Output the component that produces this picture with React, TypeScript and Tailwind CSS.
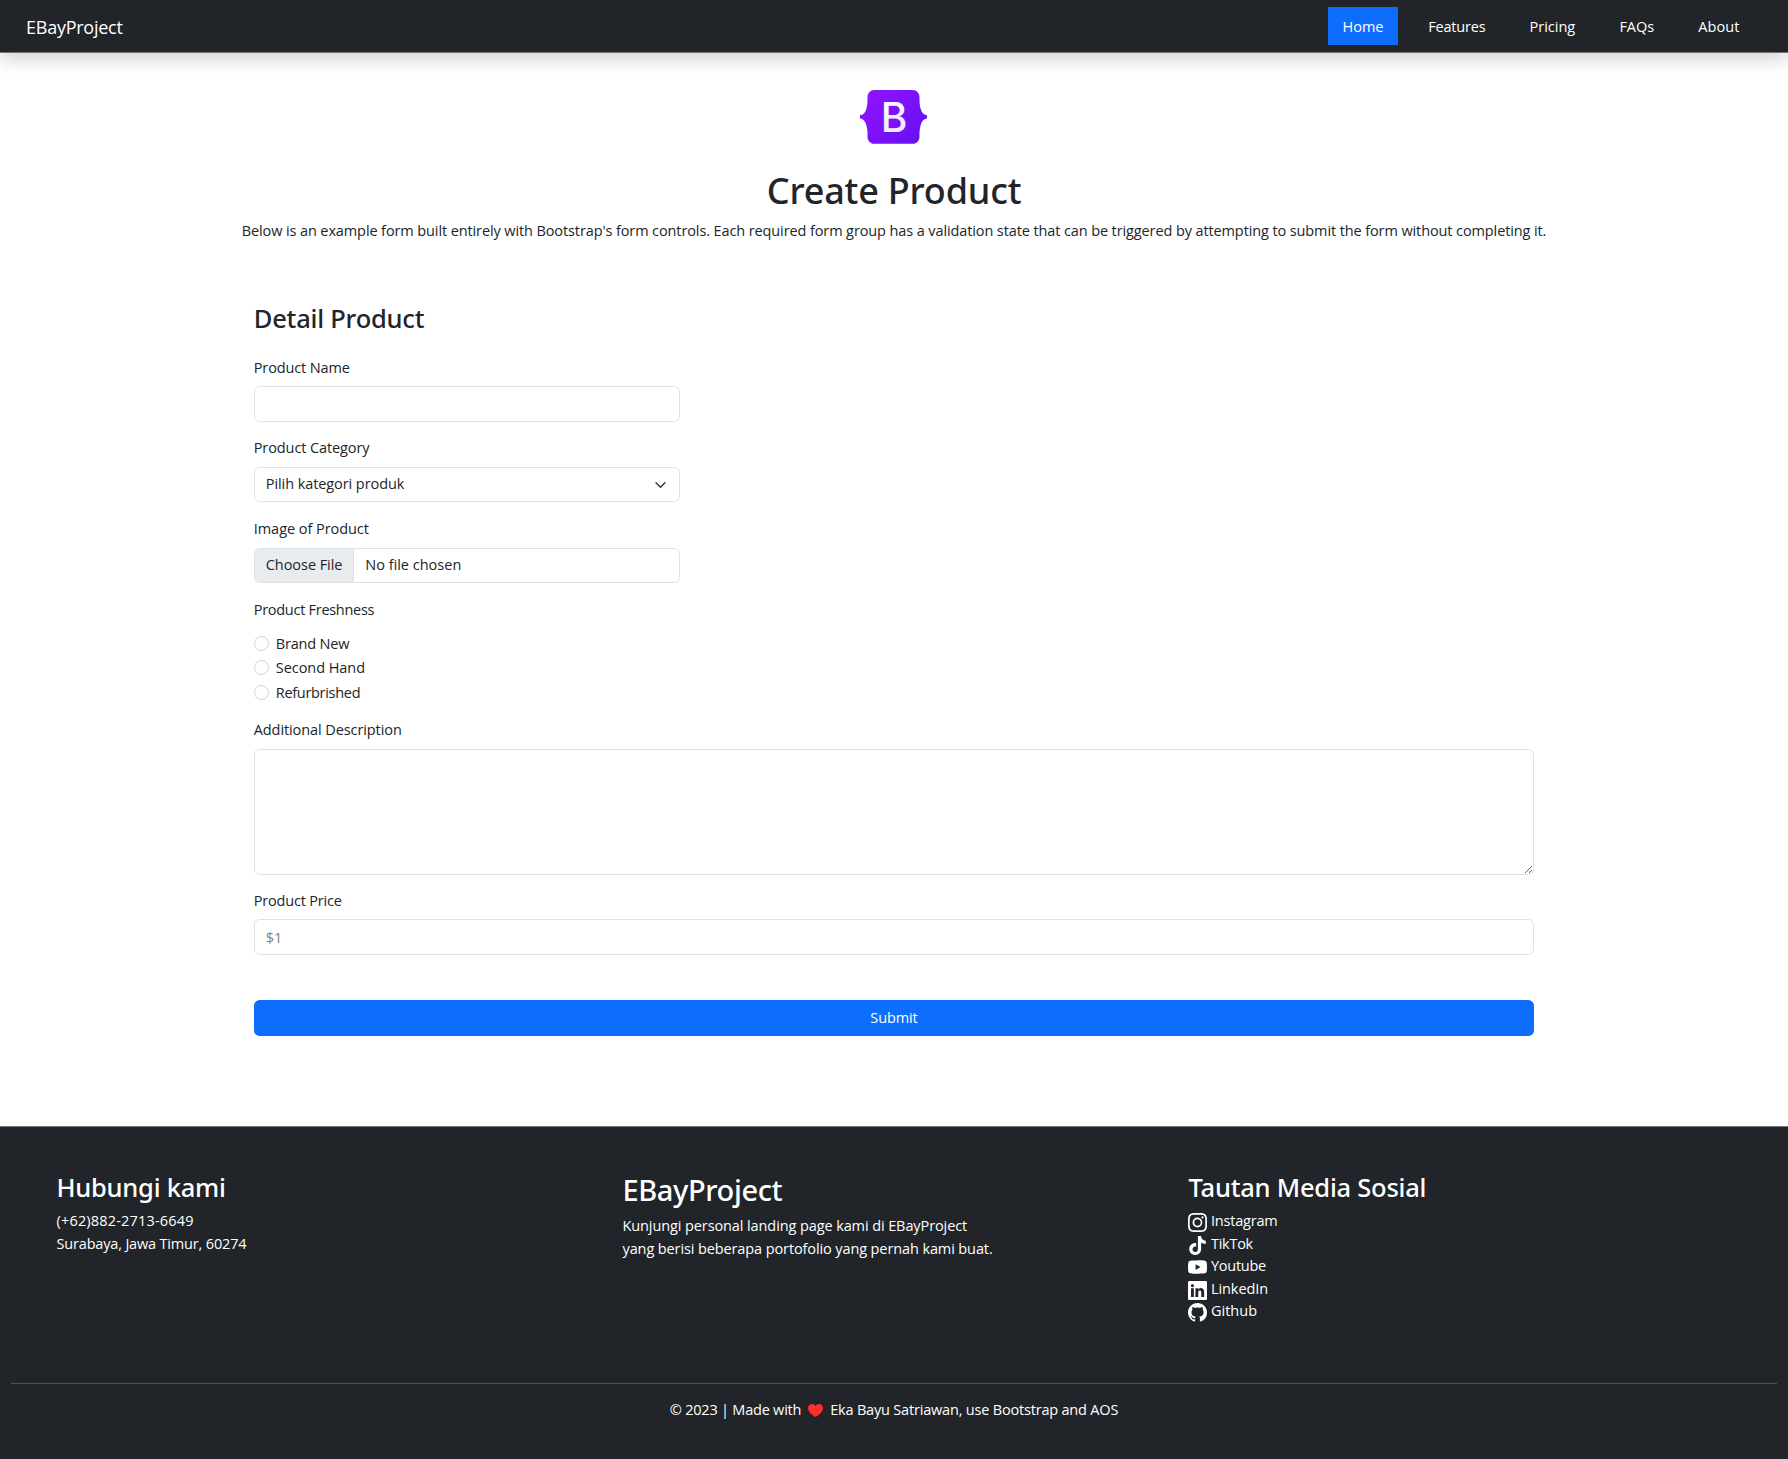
import type { ReactNode } from "react";
import { BsInstagram, BsYoutube, BsLinkedin, BsGithub } from "react-icons/bs";
import { SiTiktok } from "react-icons/si";

const navItems = [
  { label: "Features", tracking: "tracking-[-0.2px]" },
  { label: "Pricing", tracking: "tracking-[0px]" },
  { label: "FAQs", tracking: "tracking-[-0.07px]" },
  { label: "About", tracking: "tracking-[0.1px]" },
];

const conditions = [
  { label: "Brand New", tracking: "tracking-[-0.19px]" },
  { label: "Second Hand", tracking: "tracking-[-0.05px]" },
  { label: "Refurbrished", tracking: "tracking-[-0.3px]" },
];

const socials = [
  { label: "Instagram", Icon: BsInstagram, tracking: "tracking-[-0.2px]" },
  { label: "TikTok", Icon: SiTiktok, tracking: "tracking-[-0.27px]" },
  { label: "Youtube", Icon: BsYoutube, tracking: "tracking-[-0.26px]" },
  { label: "LinkedIn", Icon: BsLinkedin, tracking: "tracking-[-0.09px]" },
  { label: "Github", Icon: BsGithub, tracking: "tracking-[0px]" },
];

function BootstrapLogo() {
  return (
    <svg viewBox="0 0 67 54" className="mr-px h-[54px] w-[67px]" aria-label="Bootstrap">
      <defs>
        <linearGradient id="logo-bg" x1="8" y1="2" x2="62" y2="52" gradientUnits="userSpaceOnUse">
          <stop stopColor="#9013fe" />
          <stop offset="1" stopColor="#6610f2" />
        </linearGradient>
        <linearGradient id="logo-letter" x1="22" y1="12" x2="40" y2="42" gradientUnits="userSpaceOnUse">
          <stop stopColor="#ffffff" />
          <stop offset="1" stopColor="#f1e5fc" />
        </linearGradient>
      </defs>
      <path
        fill="url(#logo-bg)"
        d="M14.2 0C10.2 0 7.4 3.4 7.5 7.1C7.6 10.7 7.5 15.2 6.3 18.9C5.2 22.6 3.2 24.9 0 25.2V28.6C3.2 28.9 5.2 31.2 6.3 34.9C7.5 38.6 7.6 43.1 7.5 46.7C7.4 50.4 10.2 53.8 14.2 53.8H52.8C56.8 53.8 59.6 50.4 59.5 46.7C59.4 43.1 59.5 38.6 60.7 34.9C61.8 31.2 63.8 28.9 67 28.6V25.2C63.8 24.9 61.8 22.6 60.7 18.9C59.5 15.2 59.4 10.7 59.5 7.1C59.6 3.4 56.8 0 52.8 0Z"
      />
      <text x="34" y="41.8" textAnchor="middle" fill="url(#logo-letter)" className="font-['Inter'] text-[40.5px] font-medium">
        B
      </text>
    </svg>
  );
}

function Label({ tracking, children }: { tracking: string; children: ReactNode }) {
  return <div className={`mb-[7px] h-[22.5px] whitespace-nowrap ${tracking}`}>{children}</div>;
}

const control = "h-[35.5px] rounded-[5.6px] border border-[#dee2e6] bg-white px-[11px]";

export default function App() {
  return (
    <div className="flex h-[1459px] w-[1788px] flex-col overflow-hidden bg-white font-['Open_Sans','Noto_Sans',sans-serif] text-[14.5px] leading-[22.5px] text-[#212529]">
      <nav className="flex h-[53px] shrink-0 items-center justify-between border-b border-[#6f7274] bg-[#212529] pr-[34px] pl-[26px] text-white shadow-[0_8px_15px_rgba(0,0,0,0.15)]">
        <span className="pt-0.5 text-[18px] tracking-[-0.25px]">EBayProject</span>
        <div className="flex items-center gap-[30px]">
          <a className="flex h-[37.5px] w-[70.5px] items-center justify-center bg-[#0d6efd] pt-[2px]">Home</a>
          <div className="flex gap-[44.2px] pt-[1.5px] pr-[14.5px]">
            {navItems.map((n) => (
              <a key={n.label} className={n.tracking}>{n.label}</a>
            ))}
          </div>
        </div>
      </nav>

      <main className="shrink-0">
        <header className="flex flex-col items-center pt-[37px]">
          <BootstrapLogo />
          <h1 className="mt-[23.5px] h-[45px] font-['Noto_Sans'] text-[36px] leading-[45px] font-medium tracking-[-0.2px]">
            Create Product
          </h1>
          <p className="mt-[7.5px] tracking-[-0.109px] whitespace-nowrap">
            Below is an example form built entirely with Bootstrap's form controls. Each required form group has a
            validation state that can be triggered by attempting to submit the form without completing it.
          </p>
        </header>

        <form className="mx-auto mt-[59px] w-[1280.5px]">
          <h2 className="mb-[23px] font-['Noto_Sans'] text-[25.5px] leading-[32px] font-medium tracking-[-0.22px]">
            Detail Product
          </h2>

          <div className="flex w-[426.5px] flex-col gap-[15.8px]">
            <div>
              <Label tracking="tracking-[-0.12px]">Product Name</Label>
              <input className={`${control} block w-full`} />
            </div>
            <div>
              <Label tracking="tracking-[-0.1px]">Product Category</Label>
              <div className={`${control} flex w-full items-center justify-between`}>
                <span className="tracking-[-0.08px]">Pilih kategori produk</span>
                <svg viewBox="0 0 16 16" className="h-[12px] w-[15px]" fill="none" stroke="#343a40" strokeWidth="2" strokeLinecap="round" strokeLinejoin="round">
                  <path d="m2 5 6 6 6-6" />
                </svg>
              </div>
            </div>
            <div>
              <Label tracking="tracking-[-0.05px]">Image of Product</Label>
              <div className={`${control} flex w-full items-stretch overflow-hidden pl-0`}>
                <span className="flex w-[99px] items-center border-r border-[#dee2e6] bg-[#e9ecef] pl-[11px] tracking-[-0.05px]">Choose File</span>
                <span className="flex items-center pl-[11.5px]">No file chosen</span>
              </div>
            </div>
            <div>
              <Label tracking="tracking-[-0.28px]">Product Freshness</Label>
              <div className="flex flex-col gap-[2px] pt-[4.4px]">
                {conditions.map((c) => (
                  <label key={c.label} className="flex h-[22.5px] items-center gap-[7px]">
                    <input type="radio" name="freshness" className="mb-[2px] size-[15px] appearance-none rounded-full border border-[#ced1d5] bg-white" />
                    <span className={c.tracking}>{c.label}</span>
                  </label>
                ))}
              </div>
            </div>
          </div>

          <div className="mt-[14.8px]">
            <Label tracking="tracking-[-0.09px]">Additional Description</Label>
            <textarea className="block h-[126px] w-full resize rounded-[5.6px] border border-[#dee2e6] bg-white" />
          </div>
          <div className="mt-[15.2px]">
            <Label tracking="tracking-[-0.18px]">Product Price</Label>
            <input placeholder="$1" className={`${control} block w-full placeholder:text-[#7c8389]`} />
          </div>
          <button type="button" className="mt-[45px] block h-[36px] w-full rounded-[5.6px] bg-[#0d6efd] tracking-[-0.1px] text-white">
            Submit
          </button>
        </form>
      </main>

      <footer className="mt-auto h-[333px] shrink-0 border-t border-[#75787b] bg-[#212529] px-[11px] text-white">
        <div className="grid h-[256px] grid-cols-[566px_566px_1fr] pt-[44px] pl-[45.5px]">
          <section>
            <h3 className="mb-[7px] font-['Noto_Sans'] text-[25.5px] leading-[32px] font-medium tracking-[-0.25px]">Hubungi kami</h3>
            <p className="tracking-[0.18px]">(+62)882-2713-6649</p>
            <p className="tracking-[-0.17px]">Surabaya, Jawa Timur, 60274</p>
          </section>
          <section>
            <h3 className="mb-[7px] pt-px font-['Noto_Sans'] text-[29px] leading-[36px] font-medium tracking-[-0.38px]">EBayProject</h3>
            <p className="tracking-[-0.1px]">Kunjungi personal landing page kami di EBayProject</p>
            <p className="tracking-[-0.11px]">yang berisi beberapa portofolio yang pernah kami buat.</p>
          </section>
          <section>
            <h3 className="mb-[7px] font-['Noto_Sans'] text-[25.5px] leading-[32px] font-medium tracking-[-0.23px]">Tautan Media Sosial</h3>
            {socials.map(({ label, Icon, tracking }) => (
              <a key={label} className="flex h-[22.5px] items-start gap-[4px]">
                <Icon className="mt-[3px] -ml-[0.5px] size-[19px] shrink-0" />
                <span className={tracking}>{label}</span>
              </a>
            ))}
          </section>
        </div>
        <hr className="border-[#4d5154]" />
        <p className="mt-[15px] flex items-center justify-center">
          <span className="tracking-[-0.22px]">© 2023 | Made with</span>
          <svg viewBox="0 0 15 13" className="mx-[7px] h-[13px] w-[15px]" fill="#f8312f" aria-label="love">
            <path d="M7.5 2C6.7.7 5.500 0 4 0 1.700 0 0 1.800 0 4.200c0 3.500 4.200 6.700 7 8.600.3.2.7.2 1 0 2.800-1.900 7-5.100 7-8.600C15 1.800 13.300 0 11 0 9.500 0 8.300.7 7.500 2Z" />
          </svg>
          <span className="tracking-[-0.19px]">Eka Bayu Satriawan, use Bootstrap and AOS</span>
        </p>
      </footer>
    </div>
  );
}
